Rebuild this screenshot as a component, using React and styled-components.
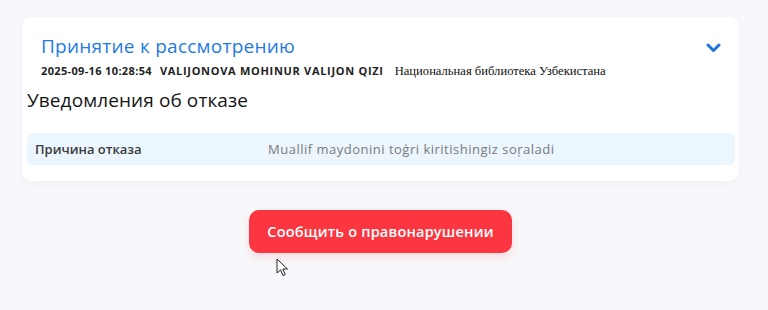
import React from "react";
import styled, { createGlobalStyle } from "styled-components";

const Global = createGlobalStyle`
  html, body { margin: 0; padding: 0; background: #f7f8fb; }
  body { font-family: "Open Sans", "Noto Sans", sans-serif; }
`;

const Page = styled.div`
  width: 768px;
  height: 310px;
  box-sizing: border-box;
  padding: 17px 29px 0 22px;
  position: relative;
  display: flex;
  flex-direction: column;
  align-items: center;
`;

const Card = styled.div`
  width: 100%;
  box-sizing: border-box;
  background: #fff;
  border-radius: 10px;
  padding: 16px 4px 16px 5px;
  box-shadow: 0 2px 10px rgba(30, 40, 80, 0.03);
`;

const Header = styled.div`
  display: flex;
  justify-content: space-between;
  align-items: flex-start;
  padding: 0 14px;
`;

const HeadText = styled.div`
  display: flex;
  flex-direction: column;
`;

const Title = styled.div`
  font-size: 19px;
  line-height: 26px;
  color: #1f7ae4;
  font-weight: 500;
  letter-spacing: 0.25px;
`;

const Meta = styled.div`
  display: flex;
  align-items: baseline;
  gap: 8px;
  margin-top: 4px;
  line-height: 16px;
`;

const MetaBold = styled.span`
  font-size: 11px;
  font-weight: 700;
  color: #222;
  letter-spacing: ${(p) => p.$spacing || "0.35px"};
`;

const MetaSerif = styled.span`
  font-family: "Liberation Serif", "Times New Roman", serif;
  font-size: 12.6px;
  color: #111;
  margin-left: 3px;
`;

const Toggle = styled.button`
  border: 0;
  background: none;
  padding: 0;
  margin-top: 10px;
  margin-right: 0;
  display: flex;
`;

const Section = styled.div`
  font-size: 19px;
  font-weight: 500;
  color: #151515;
  line-height: 24px;
  margin-top: 9px;
  letter-spacing: 0.1px;
`;

const Row = styled.div`
  display: grid;
  grid-template-columns: 233px 1fr;
  align-items: center;
  height: 32px;
  margin-top: 21px;
  background: #ebf6fe;
  border-radius: 6px;
  padding: 0 8px;
  font-size: 13px;
`;

const Label = styled.span`
  color: #3b3b3b;
  font-weight: 600;
`;

const Value = styled.span`
  color: #7a7a7a;
  letter-spacing: 0.5px;
`;

const Report = styled.button`
  margin-top: 29px;
  height: 43px;
  padding: 0 18px;
  border: 0;
  border-radius: 10px;
  background: #fb3641;
  color: #fff;
  font-family: "Open Sans", "Noto Sans", sans-serif;
  font-size: 14.5px;
  font-weight: 600;
  letter-spacing: 0.2px;
  box-shadow: 0 4px 10px rgba(251, 54, 65, 0.15);
`;

const Cursor = styled.svg`
  position: absolute;
  left: 276px;
  top: 258px;
`;

export default function App() {
  return (
    <>
      <Global />
      <Page>
        <Card>
          <Header>
            <HeadText>
              <Title>Принятие к рассмотрению</Title>
              <Meta>
                <MetaBold>2025-09-16 10:28:54</MetaBold>
                <MetaBold $spacing="0.7px">VALIJONOVA MOHINUR VALIJON QIZI</MetaBold>
                <MetaSerif>Национальная библиотека Узбекистана</MetaSerif>
              </Meta>
            </HeadText>
            <Toggle aria-label="toggle">
              <svg width="15" height="10" viewBox="0 0 15 10">
                <path d="M2 2 L7.5 7.5 L13 2" fill="none" stroke="#1f74e0" strokeWidth="3" strokeLinecap="round" strokeLinejoin="round" />
              </svg>
            </Toggle>
          </Header>
          <Section>Уведомления об отказе</Section>
          <Row>
            <Label>Причина отказа</Label>
            <Value>Muallif maydonini toģri kiritishingiz soŗaladi</Value>
          </Row>
        </Card>
        <Report>Сообщить о правонарушении</Report>
        <Cursor width="13" height="19" viewBox="0 0 13 19">
          <path d="M1 1 L1 15 L4.5 11.8 L7 17.5 L9.2 16.5 L6.8 11 L11.5 11 Z" fill="#fff" stroke="#222" strokeWidth="1" strokeLinejoin="round" />
        </Cursor>
      </Page>
    </>
  );
}
